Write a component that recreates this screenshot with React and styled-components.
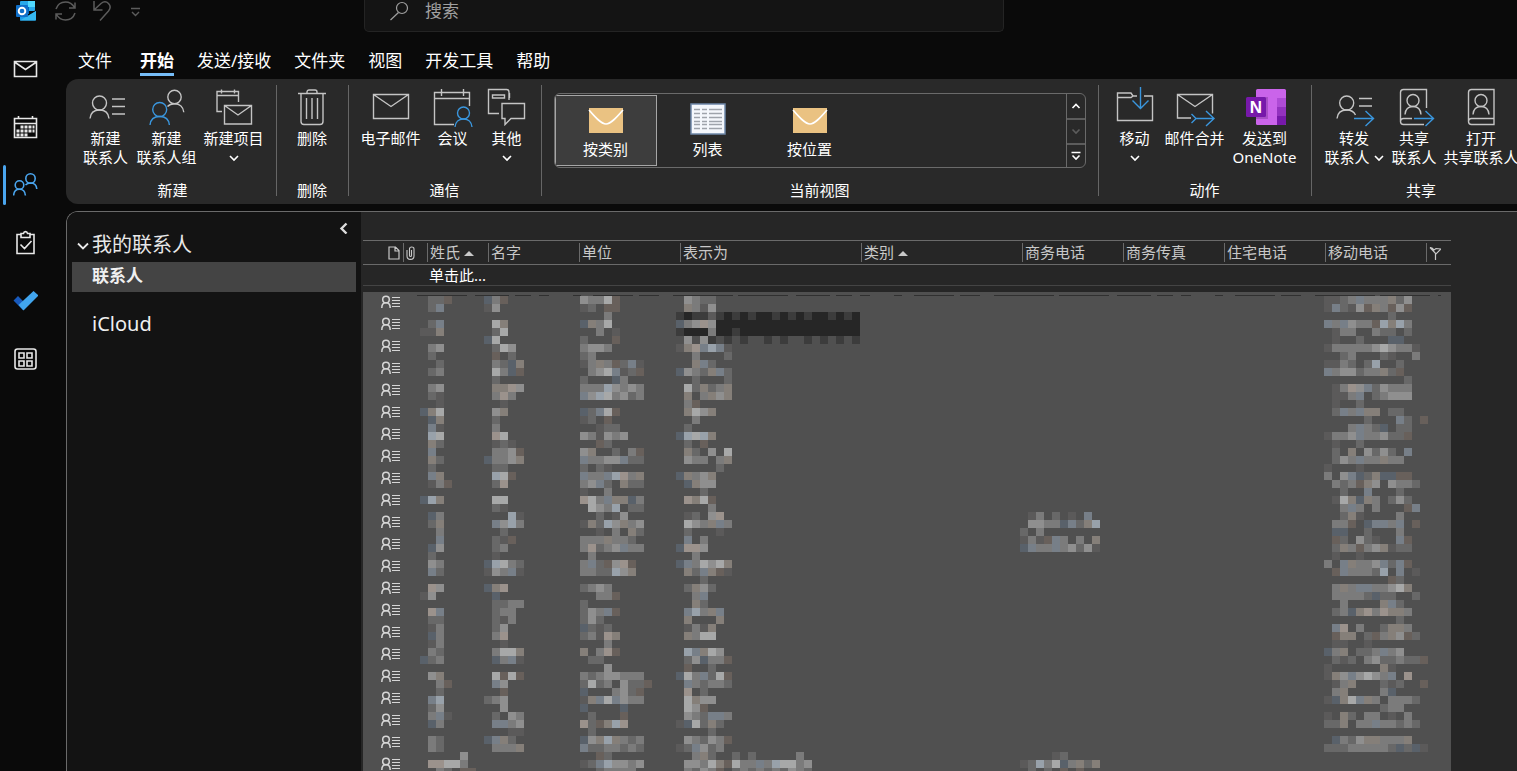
import React from "react";
import styled, { createGlobalStyle } from "styled-components";

const GlobalStyle = createGlobalStyle`
  * {
    box-sizing: border-box;
  }

  body {
    margin: 0;
    background: #0a0a0a;
    color: #ffffff;
    font-family: "Noto Sans", "Noto Sans CJK SC", sans-serif;
    font-size: 15px;
  }

  button {
    padding: 0;
    border: none;
    background: none;
    color: inherit;
    font: inherit;
    cursor: pointer;
  }
`;

const Window = styled.div`
  display: flex;
  flex-direction: column;
  height: 100vh;
  overflow: hidden;
`;

/* ---------- title bar ---------- */

const TitleBar = styled.header`
  display: flex;
  align-items: flex-start;
  flex: none;
  height: 32px;
`;

const QuickAccess = styled.div`
  display: flex;
  align-items: center;
  gap: 16px;
  width: 364px;
  height: 22px;
  padding-left: 15px;
  color: #5c5c5c;

  svg,
  button {
    display: block;
  }
`;

const SearchBox = styled.label`
  display: flex;
  align-items: center;
  gap: 16px;
  width: 640px;
  height: 32px;
  padding: 0 24px 10px;
  border: 1px solid #242424;
  border-top: none;
  border-radius: 0 0 5px 5px;
  background: #141414;
  color: #a0a0a0;

  input {
    flex: 1;
    min-width: 0;
    padding: 0;
    border: none;
    outline: none;
    background: none;
    color: #a0a0a0;
    font: inherit;
    font-size: 17px;
  }

  input::placeholder {
    color: #a0a0a0;
    opacity: 1;
  }
`;

const Body = styled.div`
  display: flex;
  flex: 1;
  min-height: 0;
`;

/* ---------- left rail ---------- */

const Rail = styled.nav`
  flex: none;
  width: 66px;
  padding-top: 7px;
`;

const RailButton = styled.button`
  position: relative;
  display: flex;
  align-items: center;
  justify-content: center;
  width: 50px;
  height: 58px;
  color: ${(props) => (props.$active ? "#4aa5ee" : "#e8e8e8")};

  &::before {
    content: "";
    position: absolute;
    left: 3px;
    top: 10px;
    width: 3px;
    height: 40px;
    border-radius: 2px;
    background: ${(props) => (props.$active ? "#4aa5ee" : "transparent")};
  }
`;

const Main = styled.main`
  display: flex;
  flex-direction: column;
  flex: 1;
  min-width: 0;
`;

/* ---------- ribbon ---------- */

const Tabs = styled.nav`
  display: flex;
  gap: 23px;
  flex: none;
  height: 47px;
  padding: 16px 12px 0;
`;

const Tab = styled.button`
  height: 28px;
  margin-left: ${(props) => (props.$active ? "5px" : "0")};
  border-bottom: 3px solid ${(props) => (props.$active ? "#76bdf8" : "transparent")};
  font-size: 17px;
  line-height: 24px;
  font-weight: ${(props) => (props.$active ? 700 : 400)};
  white-space: nowrap;
`;

const Ribbon = styled.div`
  display: flex;
  flex: none;
  height: 125px;
  padding-left: 4px;
  overflow: hidden;
  border-radius: 12px 0 0 12px;
  background: #292929;
`;

const RibbonGroup = styled.section`
  position: relative;
  display: flex;
  flex-direction: column;
  align-items: center;
  flex: none;
  width: ${(props) => props.$width}px;
  padding: 8px 2px 0 0;

  &::after {
    content: "";
    position: absolute;
    right: 0;
    top: 6px;
    bottom: 8px;
    width: 1px;
    background: #666666;
  }

  &:last-child::after {
    display: none;
  }
`;

const GroupTools = styled.div`
  display: flex;
  height: 92px;
`;

const GroupName = styled.div`
  line-height: 22px;
`;

const Tool = styled.button`
  display: flex;
  flex-direction: column;
  align-items: center;
  width: ${(props) => props.$width}px;
  line-height: 19px;
  white-space: nowrap;

  > svg {
    flex: none;
    margin-bottom: 2px;
    overflow: visible;
  }
`;

const ToolLine = styled.span`
  display: flex;
  align-items: center;
  gap: 4px;
  height: 19px;
`;

const Gallery = styled.div`
  display: flex;
  width: 532px;
  height: 75px;
  margin-top: 6px;
  overflow: hidden;
  border: 1px solid #6a6a6a;
  border-radius: 6px;
`;

const GalleryItem = styled.button`
  display: flex;
  flex-direction: column;
  align-items: center;
  width: 102px;
  height: 71px;
  margin-top: 1px;
  padding-top: 7px;
  border: 1px solid ${(props) => (props.$active ? "#a6a6a6" : "transparent")};
  background: ${(props) => (props.$active ? "#3d3d3d" : "transparent")};
  line-height: 24px;
`;

const GalleryScroll = styled.div`
  display: grid;
  grid-template-rows: repeat(3, 1fr);
  width: 19px;
  margin-left: auto;
  border-left: 1px solid #6a6a6a;

  button {
    display: flex;
    align-items: center;
    justify-content: center;
  }

  button + button {
    border-top: 2px solid #5c5c5c;
  }

  button:disabled {
    color: #5c5c5c;
  }
`;

/* ---------- content ---------- */

const Content = styled.div`
  display: flex;
  flex: 1;
  min-height: 0;
  margin-top: 7px;
  overflow: hidden;
  border-top: 1px solid #6a6a6a;
  border-left: 1px solid #6a6a6a;
  border-top-left-radius: 12px;
`;

const FolderPane = styled.aside`
  flex: none;
  width: 294px;
  padding: 0 5px;
  background: #131313;
`;

const FolderHead = styled.div`
  display: flex;
  justify-content: space-between;
  align-items: flex-start;
  height: 50px;
  padding: 10px 6px 0 5px;

  svg {
    display: block;
  }
`;

const FolderTitle = styled.button`
  display: flex;
  align-items: center;
  gap: 3px;
  margin-top: 9px;
  color: #e8e8e8;
  font-size: 20px;
  line-height: 28px;
`;

const Folder = styled.button`
  display: block;
  width: 100%;
  height: 30px;
  padding: 0 0 2px 20px;
  background: #444444;
  color: #f0f0f0;
  font-size: 17px;
  font-weight: 700;
  line-height: 28px;
  text-align: left;
`;

const Account = styled.button`
  display: block;
  margin-top: 18px;
  padding-left: 20px;
  color: #f0f0f0;
  font-size: 20px;
  line-height: 28px;
`;

const ListPane = styled.section`
  flex: 1;
  min-width: 0;
  padding: 28px 0 0 2px;
  overflow: hidden;
  background: #262626;
`;

const TableWrap = styled.div`
  position: relative;
  width: 1088px;
`;

const ContactTable = styled.table`
  width: 100%;
  table-layout: fixed;
  border-spacing: 0;

  th,
  td {
    padding: 0;
    font-weight: 400;
    text-align: left;
    white-space: nowrap;
  }
`;

const HeadCell = styled.th`
  height: 25px;
  border-top: 1px solid #6a6a6a;
  border-bottom: 1px solid #6a6a6a;
  color: #c8c8c8;
`;

const HeadLabel = styled.span`
  display: flex;
  align-items: center;
  gap: 4px;
  height: 19px;
  padding-left: ${(props) => (props.$first ? "24px" : "2px")};
  border-left: 1px solid ${(props) => (props.$first ? "transparent" : "#6a6a6a")};
  line-height: 19px;
`;

const NewCell = styled.td`
  height: 21px;
  border-bottom: 1px solid #444444;
  line-height: 18px;

  span {
    padding-left: 2px;
  }
`;

const SpacerCell = styled.td`
  height: 6px;
`;

const RowCell = styled.td`
  height: 22px;
  background: #505050;

  svg {
    display: block;
    margin: 0 0 2px 18px;
  }
`;

const MaskLayer = styled.svg`
  position: absolute;
  left: 0;
  top: 52px;
`;

/* ---------- icons ---------- */

const BLUE = "#3a96dd";

const Icon = ({ size = 40, height, color = "#c4c4c4", weight = 1.4, children }) => (
  <svg
    width={size}
    height={height || size}
    viewBox={`0 0 ${size} ${height || size}`}
    fill="none"
    stroke={color}
    strokeWidth={weight}
    aria-hidden="true"
  >
    {children}
  </svg>
);

const Chevron = ({ d = "M1 3l4 4 4-4", color = "currentColor" }) => (
  <Icon size={10} color={color} weight={1.6}>
    <path d={d} />
  </Icon>
);

const NewContactIcon = () => (
  <Icon>
    <circle cx="13.500" cy="16" r="7" />
    <path d="M4 31.500c.5-5.500 4.300-8.500 9.500-8.500s9 3 9.500 8.500M26 12h13M26 19.500h13M26 27h13" />
  </Icon>
);

const NewGroupIcon = () => (
  <Icon>
    <circle cx="27.500" cy="10" r="6.700" />
    <path d="M20.500 19.500c1.800-2 4.200-2.800 7-2.800 5.200 0 8.800 3.300 9.300 8.500" />
    <g stroke={BLUE}>
      <circle cx="12.700" cy="22.500" r="7" />
      <path d="M3 38c.5-5.500 4.300-8.500 9.700-8.500s9.200 3 9.700 8.500" />
    </g>
  </Icon>
);

const NewItemIcon = () => (
  <Icon>
    <path d="M8 24.500H3v-20h21.500V15M3 8.500h21.500M7.500 2.500v4M20.500 2.500v4" />
    <path d="M10.500 18.500h27v18.500h-27zM10.500 18.500l13.500 9.500 13.500-9.500" />
  </Icon>
);

const DeleteIcon = () => (
  <Icon>
    <path d="M6 6.500h28M15 6.500V5c0-1.300 1-2 2-2h6c1 0 2 .7 2 2v1.500M9 6.500v28c0 2 1 3 3 3h16c2 0 3-1 3-3v-28M14.500 11v21M20 11v21M25.500 11v21" />
  </Icon>
);

const MailIcon = () => (
  <Icon>
    <path d="M2.500 7.500h35v24h-35zM2.500 7.500l17.500 12 17.500-12" />
  </Icon>
);

const MeetingIcon = () => (
  <Icon>
    <path d="M21 37.500H1.500v-32h35V19M1.500 11.500h35M8.500 2v7M30.500 2v7" />
    <g stroke={BLUE}>
      <circle cx="30.500" cy="26" r="6" />
      <path d="M22 40c.4-5 4-8 8.500-8s8.100 3 8.500 8" />
    </g>
  </Icon>
);

const OtherIcon = () => (
  <Icon>
    <path d="M12 26.500H1.500v-24h18c1.500 0 2.500 1 2.500 2.500v8M22.500 6v5M5.500 8h12v3h-12z" />
    <path d="M15 16.500h22.500v15H24l-6 6v-6h-3z" />
  </Icon>
);

const MoveIcon = () => (
  <Icon>
    <path d="M22 9h-4l-2-3H2.500v27.500h35V9H29M2.500 10.500H16l2-1.500" />
    <path d="M25.500 0v21.500M17.500 13.500l8 8 8-8" stroke={BLUE} />
  </Icon>
);

const MergeIcon = () => (
  <Icon>
    <path d="M16 31H2.500V7.500h35v19M2.500 7.500l17.500 12 17.500-12" />
    <path d="M16.500 27l4.500 4.500-4.500 4.500M20 31.500h19M31 24l8 7.500-8 7.500" stroke={BLUE} />
  </Icon>
);

const NoteLetter = styled.text`
  fill: #ffffff;
  font-family: "Liberation Sans", sans-serif;
  font-size: 17px;
  font-weight: 700;
  text-anchor: middle;
`;

const OneNoteIcon = () => (
  <svg width="40" height="40" viewBox="0 0 40 40" aria-hidden="true">
    <rect x="11" y="2" width="30" height="36" rx="1.500" fill="#ca64ea" />
    <rect x="32" y="11" width="9" height="9" fill="#ae4bd5" />
    <rect x="32" y="20" width="9" height="9" fill="#9332bf" />
    <path d="M32 29h9v7.500c0 .8-.7 1.500-1.500 1.500H32z" fill="#7719aa" />
    <rect x="11" y="10" width="12" height="22" fill="#a84fc6" />
    <rect x="1" y="10" width="20" height="20" rx="1.500" fill="#7719aa" />
    <NoteLetter x="11" y="26">
      N
    </NoteLetter>
  </svg>
);

const ForwardIcon = () => (
  <Icon>
    <circle cx="12.700" cy="16" r="7" />
    <path d="M3 31.500c.5-5.500 4.300-8.500 9.700-8.500 4 0 7.300 1.800 8.800 5M25 11.500h13M25 19h13" />
    <path d="M20 31.500h19.500M31.500 24l8 7.500-8 7.500" stroke={BLUE} />
  </Icon>
);

const ShareBookIcon = () => (
  <Icon>
    <path d="M18 31.500H9.500c-4 0-4 6 0 6H30M6.500 34.500V5.500c0-2 1-3 3-3h23V21" />
    <circle cx="19" cy="13.500" r="6" />
    <path d="M11 27.500c.4-5 3.500-8 8-8s7.600 3 8 8" />
    <path d="M20 31.500h19.500M31.500 24l8 7.500-8 7.500" stroke={BLUE} />
  </Icon>
);

const OpenBookIcon = () => (
  <Icon>
    <path d="M33 31.500H10.500c-4 0-4 6 0 6H33v-35H10.500c-2 0-3 1-3 3v29" />
    <circle cx="20" cy="13.500" r="6" />
    <path d="M12 27.500c.4-5 3.500-8 8-8s7.600 3 8 8" />
  </Icon>
);

const EnvelopeView = () => (
  <svg width="36" height="34" viewBox="0 0 36 34" aria-hidden="true">
    <rect x="1" y="5" width="34" height="25" fill="#eac282" />
    <path d="M1 7c6 7 12 14 17 14S29 14 35 7" fill="none" stroke="#ffffff" strokeWidth="1.600" />
  </svg>
);

const ListView = () => (
  <svg width="36" height="34" viewBox="0 0 36 34" aria-hidden="true">
    <rect x="1" y="1" width="34" height="30" fill="#f4f7fc" stroke="#6d87a8" strokeWidth="1.500" />
    {[6, 10, 14, 18, 21, 25].map((y) => (
      <path key={y} d={`M4 ${y}.5h6M12 ${y}.5h5M19 ${y}.5h13`} stroke="#9ea3ab" strokeWidth="1.300" />
    ))}
  </svg>
);

const OutlookLogo = () => (
  <svg width="22" height="22" viewBox="0 0 22 22" aria-hidden="true">
    <rect x="5" y="1" width="15" height="10" rx="1" fill="#28a8ea" />
    <rect x="13" y="1" width="7" height="6" fill="#50d9ff" />
    <rect x="6" y="7" width="8" height="7" fill="#0364b8" />
    <path d="M5 20.500h15c.6 0 1-.4 1-1V11l-8 5-8-3z" fill="#1a9ae8" />
    <path d="M5 20.500L21 11v8.500c0 .6-.4 1-1 1z" fill="#35b8f1" />
    <rect x="1" y="5" width="12" height="12" rx="1" fill="#0f6fc9" />
    <circle cx="7" cy="11" r="3.300" fill="none" stroke="#ffffff" strokeWidth="1.900" />
  </svg>
);

const PersonRowIcon = () => (
  <Icon size={20} height={14} color="#d6d6d6" weight={1.5}>
    <circle cx="5" cy="4.500" r="3.300" />
    <path d="M.8 13c0-3.300 1.700-5.200 4.200-5.200s4.200 1.900 4.200 5.200" />
    <path d="M11 2.500h8M11 5.500h8M11 8.500h8M11 11.500h8" strokeWidth="1.200" />
  </Icon>
);

const railItems = [
  {
    name: "邮件",
    icon: (
      <path d="M1.500 5.500h22v15h-22zM1.500 6l11 7.500L23.500 6" />
    ),
  },
  {
    name: "日历",
    icon: (
      <>
        <path d="M1.500 4.500h22v19h-22zM1.500 9.500h22M5.500 2v3M19.500 2v3" />
        <path d="M7.500 13h14" strokeWidth="3" strokeDasharray="3 1" />
        <path d="M3.500 17h18" strokeWidth="3" strokeDasharray="3 1" />
        <path d="M3.500 21h11" strokeWidth="3" strokeDasharray="3 1" />
      </>
    ),
  },
  {
    name: "联系人",
    active: true,
    icon: (
      <>
        <circle cx="17.500" cy="6.500" r="4.700" />
        <path d="M12.500 13c1.400-1.400 3-2 5-2 3.500 0 6 2 6.300 6" />
        <circle cx="6.500" cy="13" r="4.300" />
        <path d="M.6 23.500c.3-4 2.700-6.200 5.900-6.200s5.600 2.200 5.900 6.200" />
      </>
    ),
  },
  {
    name: "任务",
    icon: (
      <path d="M8 4.500H4v19h17v-19h-4M8 7.500v-4h2.500c.3-2.500 3.700-2.500 4 0H17v4zM7.500 14.500l4 4 7-7.500" />
    ),
  },
  {
    name: "待办",
    icon: (
      <g stroke="none">
        <path d="M.5 12.500l4.500-4.500 5 5 5 3-5 6z" fill="#185abd" />
        <path d="M5.500 17L20.500 3l5 4.500L10.500 22.500z" fill="#41a5ee" />
      </g>
    ),
  },
  {
    name: "更多应用",
    icon: (
      <path d="M4.500 3h16c1.500 0 2.500 1 2.500 2.500v15c0 1.500-1 2.500-2.500 2.500h-16C3 23 2 22 2 20.500v-15C2 4 3 3 4.500 3zM6 7h5v5H6zM14 7h5v5h-5zM6 15h5v5H6zM14 15h5v5h-5z" />
    ),
  },
];

const ribbonTabs = ["文件", "开始", "发送/接收", "文件夹", "视图", "开发工具", "帮助"];

const newTools = [
  { lines: ["新建", "联系人"], width: 60, icon: <NewContactIcon /> },
  { lines: ["新建", "联系人组"], width: 62, icon: <NewGroupIcon /> },
  { lines: ["新建项目", ""], width: 72, icon: <NewItemIcon />, menu: true },
];

const mailTools = [
  { lines: ["电子邮件"], width: 72, icon: <MailIcon /> },
  { lines: ["会议"], width: 52, icon: <MeetingIcon /> },
  { lines: ["其他", ""], width: 56, icon: <OtherIcon />, menu: true },
];

const actionTools = [
  { lines: ["移动", ""], width: 60, icon: <MoveIcon />, menu: true },
  { lines: ["邮件合并"], width: 60, icon: <MergeIcon /> },
  { lines: ["发送到", "OneNote"], width: 80, icon: <OneNoteIcon /> },
];

const shareTools = [
  { lines: ["转发", "联系人"], width: 66, icon: <ForwardIcon />, menu: true },
  { lines: ["共享", "联系人"], width: 54, icon: <ShareBookIcon /> },
  { lines: ["打开", "共享联系人"], width: 80, icon: <OpenBookIcon /> },
];

const columns = [
  { label: "姓氏", width: 61, sorted: true },
  { label: "名字", width: 91 },
  { label: "单位", width: 101 },
  { label: "表示为", width: 181 },
  { label: "类别", width: 161, sorted: true },
  { label: "商务电话", width: 101 },
  { label: "商务传真", width: 101 },
  { label: "住宅电话", width: 101 },
  { label: "移动电话", width: 101 },
];

// Blocks that hide the private values, one word per 8px line, one letter per block.
const tones = {
  a: "#5b5a5a",
  b: "#686868",
  c: "#7b7b7b",
  d: "#8f8f8f",
  e: "#a7a8a8",
  p: "#68605b",
  q: "#857f79",
  r: "#9b928c",
  x: "#59616a",
  y: "#777f88",
  z: "#98a1aa",
  k: "#262626",
  l: "#3c3c3c",
};

const masks = [
  {
    x: 57,
    lines:
      ".bbp .by . .by aaq . .cd .b ..b .bc . .cd .ba ..a xqe .xq .ya .ze .qb .y .qb .b .yq .acp . xzq . .xc .bq ..c ..y .xd .b .dc .yb . .rd ad . .ry .bb .ac .xc .ac .cb xbc . .dq ..cp ..b .yz .bd .cya .xc . .cb .cb .....d .rreec ..cb.pp",
  },
  {
    x: 121,
    lines:
      "xcp ad . .eq .be xe .bed .p.b .cbxq .ecxp .b .qqrd .crc ..a .dq .b .c .re .aba .ccdp xccdq .bb .zep .br . .ee .ba ...za .ydzc ..b .bap .bc .a xzecb adcya . xqr .x .bbcc .bcc .bac .bd .cr ..a .ceeq .xcya . .epep .yd ..p bcd ..d .b.dc .yycd ...aa xyqb .cccq . . .",
  },
  {
    x: 217,
    lines:
      "dccep ab.pp ...c xqce ..c.a b...p cddc bc acqcpbya .cdeyabp b...xc ccczdcdc ydzecdbc . xbyep ab.p ..abb dcadcd ..pb dq..b.cp yccddybb b.ba yccyzrcq cdyb.qbb a..c recyqqxc .edcz.bb ..b.ad aqbzdqcd ..a.c.qb cccqccb crbcdycc .c cybpdrp ccbbzdq . bcdc ..ccp b bdcyp bdb xbab bcarq ...c q.crp .bb ...d cbcddccc bebc.dbbp x...cdbp aqyeydcc x....x .b...p rbpqzr .b xdqzqcbc ybbccbcb ..pb abyzddcd ..bcccc",
  },
  {
    x: 313,
    lines:
      ".dcbb .qcad lkllalklklkklklklkklklk xcdrdkkkkkkkkkkkkkkkkkk lkkkckklkkkkkkkkkkkkkkk .d.dl.l.l..l.l..l.l.l.l aqryzya ..c...b ..qyb xdcbqyb ..b...b .ebqbcq .q.cqdq .cp .qedq ..c .b xzezq .b.p .qb.d.e .dcc.cq .....b xqcdq .xqdd ...b .rqep ....c .ab.dr .edcqyc .b...a .y.c xrrd ..c xycedeq .qbyqpa ...b .bqdb ..cy ..qb .yzcqy .q...q .acaq .qcee . .zyqed .bdxccp .p..b xecybep .ycbccb .r.b .eqdd .edp .dcbyyc axebqb ....b .dcbdcp abydbc ..cqb..b.b.....c .ddceqpeccyczeecd .cbdcp.bcbcbcbdcb",
  },
  {
    x: 657,
    start: 27,
    lines: ".ac.b.a.y .ddccxybqz b.c acapyc.c.q xyccycdbda",
  },
  { x: 657, start: 57, lines: "....ab abzcexcqbq .b.b.p.p" },
  {
    x: 961,
    lines:
      "aabcycccqbd aybadpqcpdp ........b ycydccpzqzc .acc..cbb.b .a..b...xx acccccdedcca ..bc...ba..c aacb.bz..b ycddbccqbp ..........b .acrdybdccc .aacy.bcddd .a..b .bycyqq.bb .....b...yb.p ...cycbx.bb accdyccdbbp .a..b .b.q.dbdb.y .bdcyccqcc a...a c.dyxbqxxpp .cbcpqd.dccb ..b..y...b .aeqxqc.bdb ..cyc.c...py ..bqa....c .ccp.xyycy.p .xx..b...c .pb.dba..yp .bqcpcdqabb .a..a c.yqccdybyp .pycccbz.y.a ........pb .cqcyyccdeq .ccccbxbb..b ..c....qyb .bcxqrcrqqc .........b .yr.c..bqqc .pqq.bpcqdpb .aa..a xcq.bbcycd .bab.cdbbcbbp a......qa aqdydedcy.r .acq...bab..p .cq....cx axqeyqc.cccb .......bcc a.qb.cc.a.c bbq.ccyccbcb . .xcbdqqcccq bbbcccccbxbxa",
  },
];

const PrivacyMask = () => (
  <MaskLayer width="1088" height="484" viewBox="0 0 1088 484" shapeRendering="crispEdges" aria-hidden="true">
    <path
      d="M54 3.500h1024"
      stroke="#303030"
      strokeDasharray="50 8 34 6 16 8 10 24 8 12 40 6 20 14 60 5"
    />
    {masks.map((mask) =>
      mask.lines.split(" ").map((line, row) =>
        line.split("").map((tone, col) =>
          tone === "." ? null : (
            <rect
              key={`${mask.x}-${row}-${col}`}
              x={mask.x + col * 8}
              y={4 + (row + (mask.start || 0)) * 8}
              width="8"
              height="8"
              fill={tones[tone]}
            />
          )
        )
      )
    )}
  </MaskLayer>
);

const ToolGroup = ({ name, width, tools }) => (
  <RibbonGroup $width={width}>
    <GroupTools>
      {tools.map((tool) => (
        <Tool key={tool.lines.join("")} $width={tool.width}>
          {tool.icon}
          {tool.lines.map((line, i) => (
            <ToolLine key={i}>
              {line}
              {tool.menu && i === 1 && <Chevron />}
            </ToolLine>
          ))}
        </Tool>
      ))}
    </GroupTools>
    <GroupName>{name}</GroupName>
  </RibbonGroup>
);

const App = () => {
  return (
    <>
      <GlobalStyle />
      <Window>
        <TitleBar>
          <QuickAccess>
            <OutlookLogo />
            <button aria-label="同步">
              <Icon size={24} height={22} color="currentColor" weight={1.5}>
                <path d="M3 9C4.500 4.500 8 2 12.500 2c4 0 7 2 9 5.500M22 2.500V8h-6M22 13c-1.500 4.500-5 7-9.500 7-4 0-7-2-9-5.500M3 19.500V14h6" />
              </Icon>
            </button>
            <button aria-label="撤消">
              <Icon size={18} height={22} color="currentColor" weight={1.5}>
                <path d="M1 1v9h8.500M1 10l7-6.500C10.500 1.500 13.500 1.500 15.500 3.500c2 2 2 5 0 7.500L7 20.500" />
              </Icon>
            </button>
            <button aria-label="自定义快速访问工具栏">
              <Icon size={20} height={22} color="currentColor">
                <path d="M4 8.500h9M5 12l3.500 3.500L12 12" />
              </Icon>
            </button>
          </QuickAccess>
          <SearchBox>
            <Icon size={20} height={22} color="currentColor" weight={1.2}>
              <circle cx="13" cy="8" r="5.500" />
              <path d="M9.500 12.500L1.500 20" />
            </Icon>
            <input type="text" placeholder="搜索" aria-label="搜索" />
          </SearchBox>
        </TitleBar>

        <Body>
          <Rail>
            {railItems.map((item) => (
              <RailButton key={item.name} $active={item.active} aria-label={item.name}>
                <Icon size={25} color="currentColor" weight={1.6}>
                  {item.icon}
                </Icon>
              </RailButton>
            ))}
          </Rail>

          <Main>
            <Tabs>
              {ribbonTabs.map((tab) => (
                <Tab key={tab} $active={tab === "开始"}>
                  {tab}
                </Tab>
              ))}
            </Tabs>

            <Ribbon>
              <ToolGroup name="新建" width={207} tools={newTools} />
              <ToolGroup name="删除" width={72} tools={[{ lines: ["删除"], width: 60, icon: <DeleteIcon /> }]} />
              <ToolGroup name="通信" width={193} tools={mailTools} />
              <RibbonGroup $width={557}>
                <GroupTools>
                  <Gallery>
                    <GalleryItem $active>
                      <EnvelopeView />
                      按类别
                    </GalleryItem>
                    <GalleryItem>
                      <ListView />
                      列表
                    </GalleryItem>
                    <GalleryItem>
                      <EnvelopeView />
                      按位置
                    </GalleryItem>
                    <GalleryScroll>
                      <button aria-label="上一行">
                        <Chevron d="M1.500 7L5 3.500 8.500 7" />
                      </button>
                      <button aria-label="下一行" disabled>
                        <Chevron d="M1.500 3.500L5 7l3.500-3.500" />
                      </button>
                      <button aria-label="其他视图">
                        <Chevron d="M.5 1.500h9M1.500 4.500L5 8l3.500-3.500" />
                      </button>
                    </GalleryScroll>
                  </Gallery>
                </GroupTools>
                <GroupName>当前视图</GroupName>
              </RibbonGroup>
              <ToolGroup name="动作" width={213} tools={actionTools} />
              <ToolGroup name="共享" width={220} tools={shareTools} />
            </Ribbon>

            <Content>
              <FolderPane>
                <FolderHead>
                  <FolderTitle>
                    <Icon size={12} color="currentColor" weight={1.8}>
                      <path d="M1 4.500l5 5 5-5" />
                    </Icon>
                    我的联系人
                  </FolderTitle>
                  <button aria-label="折叠文件夹窗格">
                    <Icon size={12} color="#dddddd" weight={2.4}>
                      <path d="M8.500 1.500L3.500 6.500l5 5" />
                    </Icon>
                  </button>
                </FolderHead>
                <Folder>联系人</Folder>
                <Account>iCloud</Account>
              </FolderPane>

              <ListPane>
                <TableWrap>
                  <ContactTable>
                    <colgroup>
                      <col width="40" />
                      <col width="24" />
                      {columns.map((column) => (
                        <col key={column.label} width={column.width} />
                      ))}
                      <col width="25" />
                    </colgroup>
                    <thead>
                      <tr>
                        <HeadCell aria-label="图标">
                          <HeadLabel $first>
                            <Icon size={12} height={14} color="#c8c8c8" weight={1.2}>
                              <path d="M1 1h6.500L11 4.500V13H1zM7 1v4h4" />
                            </Icon>
                          </HeadLabel>
                        </HeadCell>
                        <HeadCell aria-label="附件">
                          <HeadLabel>
                            <Icon size={10} height={14} color="#c8c8c8" weight={1.1}>
                              <path d="M1 4v6c0 4.500 7 4.500 7 0V3c0-2.700-4.500-2.700-4.500 0v6.500c0 1.400 2 1.400 2 0V4" />
                            </Icon>
                          </HeadLabel>
                        </HeadCell>
                        {columns.map((column) => (
                          <HeadCell key={column.label}>
                            <HeadLabel>
                              {column.label}
                              {column.sorted && (
                                <svg width="10" height="6" viewBox="0 0 10 6" aria-hidden="true">
                                  <path d="M0 6l5-5 5 5z" fill="#c8c8c8" />
                                </svg>
                              )}
                            </HeadLabel>
                          </HeadCell>
                        ))}
                        <HeadCell aria-label="标志">
                          <HeadLabel>
                            <Icon size={12} height={14} color="#c8c8c8" weight={1.2}>
                              <path d="M1 1.500l2 .5 2 2 2-1.500 5 .5-5 5L1 1.500M6.500 7v7" />
                            </Icon>
                          </HeadLabel>
                        </HeadCell>
                      </tr>
                    </thead>
                    <tbody>
                      <tr>
                        <NewCell colSpan={2} />
                        <NewCell colSpan={10}>
                          <span>单击此...</span>
                        </NewCell>
                      </tr>
                      <tr>
                        <SpacerCell colSpan={12} />
                      </tr>
                      {Array.from({ length: 22 }, (_, i) => (
                        <tr key={i}>
                          <RowCell colSpan={12}>
                            <PersonRowIcon />
                          </RowCell>
                        </tr>
                      ))}
                    </tbody>
                  </ContactTable>
                  <PrivacyMask />
                </TableWrap>
              </ListPane>
            </Content>
          </Main>
        </Body>
      </Window>
    </>
  );
};

export default App;
